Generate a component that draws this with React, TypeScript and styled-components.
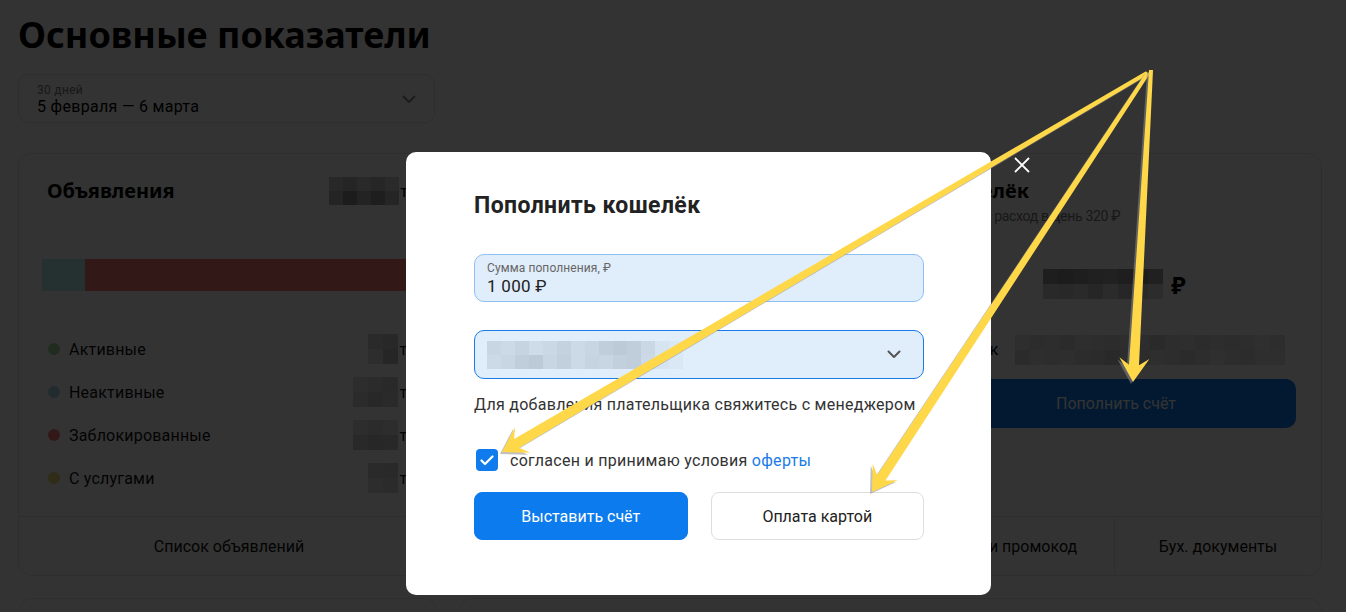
import React from 'react';
import styled, { createGlobalStyle } from 'styled-components';

const GlobalStyle = createGlobalStyle`
  html, body {
    margin: 0;
    padding: 0;
    background: #ffffff;
  }
  body {
    font-family: Roboto, "Noto Sans", Arial, sans-serif;
    color: #000;
    overflow: hidden;
  }
  * {
    box-sizing: border-box;
  }
`;

const Page = styled.div`
  width: 1346px;
  height: 612px;
  padding: 12px 24px 0 18px;
  overflow: hidden;
`;

const PageTitle = styled.h1`
  margin: 0;
  font-family: "Noto Sans", Arial, sans-serif;
  font-weight: 700;
  font-size: 36px;
  line-height: 46px;
`;

const DateSelect = styled.div`
  margin-top: 16px;
  width: 417px;
  height: 49px;
  border: 1px solid #e4e4e4;
  border-radius: 10px;
  padding: 2px 18px 0;
  display: flex;
  align-items: center;
  justify-content: space-between;
`;

const DateText = styled.div`
  display: flex;
  flex-direction: column;
  letter-spacing: 0.3px;
`;

const DateHint = styled.span`
  font-size: 12px;
  line-height: 14px;
  color: #777;
`;

const DateValue = styled.span`
  font-size: 16px;
  line-height: 20px;
  color: #000;
`;

const Board = styled.div`
  margin-top: 30px;
  border: 1px solid #e6e6e6;
  border-radius: 14px;
  display: grid;
  grid-template-columns: 420px 1fr 413px;
  grid-template-rows: 362px 59px;
`;

const Column = styled.div<{ $right?: number }>`
  padding: 24px ${p => p.$right ?? 28}px 0 28px;
  display: flex;
  flex-direction: column;
`;

const Heading = styled.div`
  display: flex;
  align-items: center;
  justify-content: space-between;
  height: 26px;
`;

const CardTitle = styled.h2`
  margin: 0;
  font-family: "Noto Sans", Arial, sans-serif;
  font-weight: 700;
  font-size: 20px;
  line-height: 26px;
`;

const Count = styled.span`
  display: flex;
  align-items: center;
  gap: 1px;
  font-size: 16px;
`;

const Bar = styled.div`
  margin: 55px -5px 0;
  height: 32px;
  display: flex;
`;

const BarPart = styled.div<{ $color: string; $width?: number }>`
  background: ${p => p.$color};
  flex: ${p => (p.$width ? `0 0 ${p.$width}px` : '1')};
`;

const Legend = styled.ul`
  list-style: none;
  margin: 48px 0 0;
  padding: 0;
  display: flex;
  flex-direction: column;
  gap: 23px;
`;

const LegendRow = styled.li`
  display: flex;
  align-items: center;
  height: 20px;
  font-size: 16px;
  color: #111;
  letter-spacing: 0.2px;
`;

const Dot = styled.span<{ $color: string }>`
  width: 12px;
  height: 12px;
  border-radius: 50%;
  background: ${p => p.$color};
  margin: 0 9px 0 1px;
`;

const LegendLabel = styled.span`
  flex: 1;
`;

const Subtitle = styled.div`
  margin-top: 3px;
  font-size: 14px;
  line-height: 18px;
  letter-spacing: -0.3px;
  color: #777;
`;

const Amount = styled.div`
  margin-top: 43px;
  height: 32px;
  display: flex;
  align-items: center;
  justify-content: center;
  gap: 8px;
  font-family: "Noto Sans", Arial, sans-serif;
  font-weight: 700;
  font-size: 24px;
`;

const Balance = styled.div`
  margin-top: 34px;
  height: 31px;
  display: flex;
  align-items: center;
  gap: 16px;
  font-size: 16px;
  letter-spacing: 0.3px;
`;

const PayButton = styled.button`
  margin-top: 14px;
  margin-right: -3px;
  height: 49px;
  border: none;
  border-radius: 10px;
  background: #0a7cf2;
  color: #fff;
  font: inherit;
  font-size: 16px;
`;

const NavCell = styled.div<{ $divider?: boolean }>`
  border-top: 1px solid #e6e6e6;
  border-left: ${p => (p.$divider ? '1px solid #e6e6e6' : 'none')};
  display: flex;
  align-items: center;
  justify-content: center;
  font-size: 16px;
  color: #111;
`;

const NavRow = styled.div`
  grid-column: 1 / -1;
  display: grid;
  grid-template-columns: 420px 262px 200px 213px 1fr;
`;

const BottomRow = styled.div`
  margin-top: 22px;
  display: grid;
  grid-template-columns: 420px 1fr;
  gap: 20px;
`;

const BottomCard = styled.div`
  height: 80px;
  border: 1px solid #e6e6e6;
  border-radius: 14px;
`;

const MosaicGrid = styled.span<{ $cols: number; $cell: number }>`
  display: inline-grid;
  grid-template-columns: repeat(${p => p.$cols}, ${p => p.$cell}px);
  grid-auto-rows: ${p => p.$cell}px;
`;

const MosaicCell = styled.span<{ $shade: string }>`
  background: ${p => p.$shade};
`;

const Backdrop = styled.div`
  position: fixed;
  inset: 0;
  background: rgba(0, 0, 0, 0.8);
  display: flex;
  align-items: flex-start;
  padding: 152px 0 0 406px;
`;

const Modal = styled.div`
  position: relative;
  width: 585px;
  height: 443px;
  background: #fff;
  border-radius: 10px;
  padding: 40px 67px 0 68px;
  font-family: Roboto, "Noto Sans", Arial, sans-serif;
  color: #222;
  letter-spacing: 0.28px;
`;

const CloseButton = styled.button`
  position: absolute;
  top: 2px;
  right: -42px;
  width: 22px;
  height: 22px;
  padding: 0;
  border: none;
  background: transparent;
  display: flex;
  align-items: center;
  justify-content: center;
`;

const ModalTitle = styled.h3`
  margin: 0;
  font-size: 23px;
  line-height: 28px;
  font-weight: 700;
  letter-spacing: 0.4px;
  color: #222;
`;

const Field = styled.div<{ $focused?: boolean }>`
  height: ${p => (p.$focused ? 49 : 48)}px;
  background: #e0edfa;
  border: 1px solid ${p => (p.$focused ? '#1a7be8' : '#8fc0f4')};
  border-radius: 10px;
  padding: 0 22px 0 12px;
  display: flex;
  align-items: center;
  justify-content: space-between;
`;

const AmountField = styled(Field)`
  margin-top: 34px;
  flex-direction: column;
  align-items: flex-start;
  justify-content: center;
  gap: 1px;
`;

const SelectField = styled(Field)`
  margin-top: 28px;
`;

const FieldLabel = styled.span`
  font-size: 12px;
  line-height: 14px;
  color: #666;
  letter-spacing: 0.1px;
`;

const FieldValue = styled.span`
  font-size: 17px;
  line-height: 20px;
  color: #222;
`;

const Hint = styled.p`
  margin: 16px 0 0;
  font-size: 16px;
  line-height: 20px;
  color: #333;
`;

const Agree = styled.label`
  margin-top: 34px;
  display: flex;
  align-items: center;
  gap: 12px;
  height: 22px;
  font-size: 16px;
  color: #333;
`;

const Checkbox = styled.span`
  margin-left: 2px;
  width: 22px;
  height: 22px;
  border-radius: 4px;
  background: #0f7bec;
  display: flex;
  align-items: center;
  justify-content: center;
`;

const Link = styled.a`
  color: #1a7be8;
  text-decoration: none;
`;

const Actions = styled.div`
  margin-top: 21px;
  display: grid;
  grid-template-columns: 1fr 1fr;
  gap: 23px;
`;

const ActionButton = styled.button<{ $primary?: boolean }>`
  height: 48px;
  border-radius: 8px;
  font: inherit;
  font-size: 16px;
  letter-spacing: 0;
  border: 1px solid ${p => (p.$primary ? '#0c7bee' : '#dddddd')};
  background: ${p => (p.$primary ? '#0c7bee' : '#fff')};
  color: ${p => (p.$primary ? '#fff' : '#222')};
`;

const ArrowLayer = styled.svg`
  position: fixed;
  inset: 0;
  width: 1346px;
  height: 612px;
  pointer-events: none;
`;

// blurred numbers, drawn as a mosaic of shades
function Mosaic({ cols, cell, shades }: { cols: number; cell: number; shades: string[] }) {
  return (
    <MosaicGrid $cols={cols} $cell={cell}>
      {shades.map((s, i) => (
        <MosaicCell key={i} $shade={s} />
      ))}
    </MosaicGrid>
  );
}

const gray = (list: number[]) => list.map(v => `rgb(${v},${v},${v})`);
const bluish = (list: number[]) => list.map(v => `rgb(${v - 22},${v - 8},${v + 6})`);

const Chevron = ({ color }: { color: string }) => (
  <svg width="14" height="9" viewBox="0 0 14 9" fill="none">
    <path d="M1.5 1.5L7 7l5.5-5.5" stroke={color} strokeWidth="2" strokeLinecap="round" strokeLinejoin="round" />
  </svg>
);

type Pt = [number, number];

function arrowPoints(o: Pt, t: Pt) {
  const dx = t[0] - o[0];
  const dy = t[1] - o[1];
  const len = Math.hypot(dx, dy);
  const d: Pt = [dx / len, dy / len];
  const n: Pt = [-d[1], d[0]];
  const at = (base: Pt, along: number, side: number): string =>
    `${(base[0] + d[0] * along + n[0] * side).toFixed(1)},${(base[1] + d[1] * along + n[1] * side).toFixed(1)}`;
  return [
    at(o, 0, 2),
    at(t, -17, 5),
    at(t, -24, 15),
    at(t, 0, 0),
    at(t, -24, -15),
    at(t, -17, -5),
    at(o, 0, -2),
  ].join(' ');
}

const arrows: [Pt, Pt][] = [
  [[1147, 73], [502, 452]],
  [[1148, 73], [872, 492]],
  [[1151, 70], [1133, 382]],
];

const legend = [
  { label: 'Активные', color: '#a6dca6', shades: gray([210, 200, 225, 190]), cols: 2 },
  { label: 'Неактивные', color: '#a8d8e0', shades: gray([225, 215, 205, 215, 200, 210]), cols: 3 },
  { label: 'Заблокированные', color: '#ff7a80', shades: gray([222, 215, 225, 205, 195, 200]), cols: 3 },
  { label: 'С услугами', color: '#f2dc78', shades: gray([210, 205, 225, 215]), cols: 2 },
];

export default function App() {
  return (
    <>
      <GlobalStyle />
      <Page>
        <PageTitle>Основные показатели</PageTitle>
        <DateSelect>
          <DateText>
            <DateHint>30 дней</DateHint>
            <DateValue>5 февраля — 6 марта</DateValue>
          </DateText>
          <Chevron color="#888" />
        </DateSelect>

        <Board>
          <Column $right={6}>
            <Heading>
              <CardTitle>Объявления</CardTitle>
              <Count>
                <Mosaic cols={5} cell={14} shades={gray([200, 185, 205, 190, 210, 180, 140, 175, 150, 185])} />
                тыс.
              </Count>
            </Heading>
            <Bar>
              <BarPart $color="#b8f0f0" $width={43} />
              <BarPart $color="#ff7b7b" />
            </Bar>
            <Legend>
              {legend.map(item => (
                <LegendRow key={item.label}>
                  <Dot $color={item.color} />
                  <LegendLabel>{item.label}</LegendLabel>
                  <Count>
                    <Mosaic cols={item.cols} cell={15} shades={item.shades} />
                    тыс.
                  </Count>
                </LegendRow>
              ))}
            </Legend>
          </Column>
          <Column />
          <Column>
            <CardTitle>Кошелёк</CardTitle>
            <Subtitle>Средний расход в день 320 ₽</Subtitle>
            <Amount>
              <Mosaic
                cols={8}
                cell={15}
                shades={gray([150, 140, 150, 160, 165, 150, 145, 160, 205, 200, 210, 190, 215, 190, 205, 220])}
              />
              ₽
            </Amount>
            <Balance>
              Остаток
              <Mosaic
                cols={18}
                cell={15}
                shades={gray([
                  230, 220, 225, 215, 228, 222, 218, 230, 226, 210, 224, 230, 220, 226, 218, 225, 232, 226,
                  215, 228, 222, 230, 220, 214, 205, 226, 218, 230, 222, 212, 226, 232, 224, 220, 230, 228,
                ])}
              />
            </Balance>
            <PayButton>Пополнить счёт</PayButton>
          </Column>
          <NavRow>
            <NavCell>Список объявлений</NavCell>
            <NavCell>Статистика</NavCell>
            <NavCell>Отчёты</NavCell>
            <NavCell>Акции и промокод</NavCell>
            <NavCell $divider>Бух. документы</NavCell>
          </NavRow>
        </Board>

        <BottomRow>
          <BottomCard />
          <BottomCard />
        </BottomRow>
      </Page>

      <Backdrop>
        <Modal>
          <CloseButton aria-label="Закрыть">
            <svg width="16" height="16" viewBox="0 0 16 16">
              <path d="M1 1l14 14M15 1L1 15" stroke="#fff" strokeWidth="1.8" />
            </svg>
          </CloseButton>
          <ModalTitle>Пополнить кошелёк</ModalTitle>
          <AmountField>
            <FieldLabel>Сумма пополнения, ₽</FieldLabel>
            <FieldValue>1 000 ₽</FieldValue>
          </AmountField>
          <SelectField $focused>
            <Mosaic
              cols={14}
              cell={14}
              shades={bluish([
                222, 226, 220, 228, 224, 218, 226, 222, 214, 210, 214, 224, 236, 240,
                226, 222, 214, 210, 222, 216, 226, 220, 222, 216, 214, 226, 236, 240,
              ])}
            />
            <Chevron color="#555" />
          </SelectField>
          <Hint>Для добавления плательщика свяжитесь с менеджером</Hint>
          <Agree>
            <Checkbox>
              <svg width="14" height="11" viewBox="0 0 14 11" fill="none">
                <path d="M1.5 5.5L5 9l7.5-7.5" stroke="#fff" strokeWidth="2.2" strokeLinecap="round" strokeLinejoin="round" />
              </svg>
            </Checkbox>
            <span>
              согласен и принимаю условия <Link href="#">оферты</Link>
            </span>
          </Agree>
          <Actions>
            <ActionButton $primary>Выставить счёт</ActionButton>
            <ActionButton>Оплата картой</ActionButton>
          </Actions>
        </Modal>
      </Backdrop>

      <ArrowLayer viewBox="0 0 1346 612">
        {arrows.map(([o, t], i) => (
          <g key={i}>
            <polygon points={arrowPoints(o, t)} fill="#8a8a8a" opacity="0.55" transform="translate(-2 2)" />
            <polygon points={arrowPoints(o, t)} fill="#ffd84a" />
          </g>
        ))}
      </ArrowLayer>
    </>
  );
}
